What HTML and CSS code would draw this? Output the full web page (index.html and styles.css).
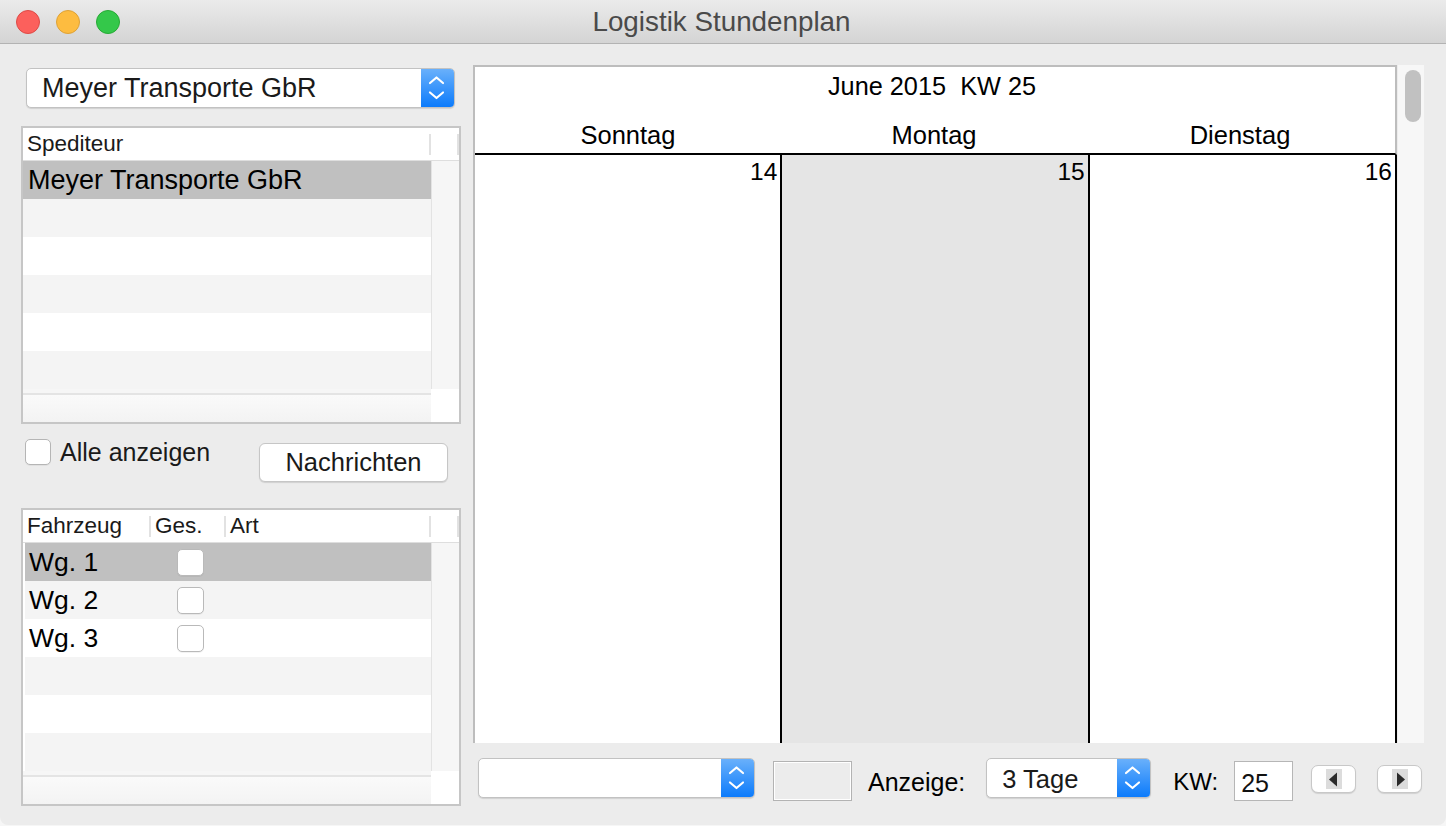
FILE: index.html
```html
<!DOCTYPE html>
<html>
<head>
<meta charset="utf-8">
<title>Logistik Stundenplan</title>
<link rel="stylesheet" href="styles.css">
</head>
<body>
<div class="window">
  <div class="titlebar">
    <div class="lights">
      <span class="light red"></span>
      <span class="light yellow"></span>
      <span class="light green"></span>
    </div>
    <div class="title">Logistik Stundenplan</div>
    <div></div>
  </div>

  <div class="content">
    <!-- left side: carrier + vehicles -->
    <div class="left">
      <div class="popup popup-carrier">
        <span class="popup-text">Meyer Transporte GbR</span>
        <span class="popup-arrows">
          <svg width="33" height="38" viewBox="0 0 33 38"><polyline points="9,14 15.5,8.5 22,14"/><polyline points="9,23.5 15.5,29 22,23.5"/></svg>
        </span>
      </div>

      <div class="table table-carrier">
        <div class="thead">
          <div class="th th-full">Spediteur</div>
          <div class="sep"></div>
          <div class="th th-scroll"></div>
          <div class="sep"></div>
        </div>
        <div class="rows">
          <div class="row selected"><span class="cell-name">Meyer Transporte GbR</span></div>
          <div class="row alt"></div>
          <div class="row"></div>
          <div class="row alt"></div>
          <div class="row"></div>
          <div class="row alt"></div>
        </div>
        <div class="vscroll"></div>
        <div class="hscroll"></div>
        <div class="corner"></div>
      </div>

      <div class="options">
        <label class="check-label"><span class="checkbox"></span>Alle anzeigen</label>
        <button class="button">Nachrichten</button>
      </div>

      <div class="table table-vehicles">
        <div class="thead">
          <div class="th th-vehicle">Fahrzeug</div>
          <div class="sep"></div>
          <div class="th th-ges">Ges.</div>
          <div class="sep"></div>
          <div class="th th-art">Art</div>
          <div class="sep"></div>
          <div class="th th-scroll"></div>
          <div class="sep"></div>
        </div>
        <div class="rows inset">
          <div class="row selected"><span class="cell-vehicle">Wg. 1</span><span class="checkbox small"></span></div>
          <div class="row alt"><span class="cell-vehicle">Wg. 2</span><span class="checkbox small"></span></div>
          <div class="row"><span class="cell-vehicle">Wg. 3</span><span class="checkbox small"></span></div>
          <div class="row alt"></div>
          <div class="row"></div>
          <div class="row alt"></div>
        </div>
        <div class="vscroll"></div>
        <div class="hscroll"></div>
        <div class="corner"></div>
      </div>
    </div>

    <!-- right side: calendar -->
    <div class="right">
      <div class="cal-wrap">
        <div class="calendar">
          <div class="cal-head">
            <div class="cal-title">June 2015&nbsp;&nbsp;KW 25</div>
            <div class="cal-days">
              <div>Sonntag</div>
              <div>Montag</div>
              <div>Dienstag</div>
            </div>
          </div>
          <div class="cal-body">
            <div class="day">14</div>
            <div class="day shaded">15</div>
            <div class="day">16</div>
          </div>
        </div>
        <div class="scrollbar"><div class="thumb"></div></div>
      </div>

      <div class="toolbar">
        <div class="popup popup-empty">
          <span class="popup-text"></span>
          <span class="popup-arrows">
            <svg width="33" height="38" viewBox="0 0 33 38"><polyline points="9,14 15.5,8.5 22,14"/><polyline points="9,23.5 15.5,29 22,23.5"/></svg>
          </span>
        </div>
        <div class="well"></div>
        <span class="label label-anzeige">Anzeige:</span>
        <div class="popup popup-days">
          <span class="popup-text">3 Tage</span>
          <span class="popup-arrows">
            <svg width="33" height="38" viewBox="0 0 33 38"><polyline points="9,14 15.5,8.5 22,14"/><polyline points="9,23.5 15.5,29 22,23.5"/></svg>
          </span>
        </div>
        <span class="label label-kw">KW:</span>
        <div class="field">25</div>
        <button class="arrow-btn prev">
          <svg width="16" height="20" viewBox="0 0 16 20"><rect width="16" height="20" fill="#dcdcdc"/><polygon points="3,10.5 11,3.5 11,17.5" fill="#2b2b2b"/></svg>
        </button>
        <button class="arrow-btn next">
          <svg width="16" height="20" viewBox="0 0 16 20"><rect width="16" height="20" fill="#dcdcdc"/><polygon points="5,3.5 13,10.5 5,17.5" fill="#2b2b2b"/></svg>
        </button>
      </div>
    </div>
  </div>
</div>
</body>
</html>
```

FILE: styles.css
```css
body {
    margin: 0;
    background: #f6f6f6;
    font-family: "Liberation Sans", Arial, sans-serif;
    color: #111;
}

.window {
    width: 1446px;
    height: 825px;
    background: #ececec;
    border-radius: 0 0 8px 8px;
    overflow: hidden;
    display: flex;
    flex-direction: column;
}

/* title bar */
.titlebar {
    height: 44px;
    box-sizing: border-box;
    border-bottom: 1px solid #b3b3b3;
    background: linear-gradient(#ebebeb, #d4d4d4);
    display: grid;
    grid-template-columns: 1fr auto 1fr;
    align-items: center;
}

.lights {
    display: flex;
    gap: 16px;
    padding-left: 16px;
    margin-top: 1px;
}

.light {
    width: 22px;
    height: 22px;
    border-radius: 50%;
    border: 1px solid;
}

.red { background: #fc605c; border-color: #de4a46; }
.yellow { background: #fdbc40; border-color: #dea236; }
.green { background: #34c84a; border-color: #27aa35; }

.title {
    font-size: 27.8px;
    color: #4a4a4a;
    margin-left: -3px;
    margin-top: 1px;
}

/* main area */
.content {
    flex: 1;
    display: flex;
    gap: 12px;
    padding: 21px 0 0 21px;
}

.left {
    width: 440px;
    display: flex;
    flex-direction: column;
}

/* popup buttons */
.popup {
    height: 40px;
    box-sizing: border-box;
    display: flex;
    background: #fff;
    border: 1px solid #c2c2c2;
    border-radius: 5px;
    box-shadow: 0 1px 1px rgba(0, 0, 0, 0.12);
    overflow: hidden;
}

.popup-text {
    flex: 1;
    padding-left: 15px;
    font-size: 25.5px;
    line-height: 40px;
    color: #1a1a1a;
}

.popup-arrows {
    width: 33px;
    background: linear-gradient(#69b0fb, #0c7bfb);
    display: flex;
    align-items: center;
}

.popup-arrows polyline {
    fill: none;
    stroke: #fff;
    stroke-width: 2.2;
    stroke-linecap: round;
    stroke-linejoin: round;
}

.popup-carrier {
    margin: 3px 6px 0 5px;
}

.popup-carrier .popup-text {
    font-size: 27px;
    line-height: 38px;
}

/* tables */
.table {
    height: 298px;
    box-sizing: border-box;
    border: 2px solid #c6c6c6;
    background: #fff;
    display: grid;
    grid-template-columns: 408px 28px;
    grid-template-rows: 33px 228px 33px;
}

.table-carrier {
    margin-top: 18px;
}

.table-vehicles {
    margin-top: 26px;
}

.thead {
    grid-column: 1 / 3;
    display: flex;
    align-items: center;
    border-bottom: 1px solid #dedede;
    font-size: 22.5px;
    color: #1a1a1a;
}

.th {
    padding-left: 4px;
    box-sizing: border-box;
}

.th-full { width: 406px; }
.th-scroll { width: 26px; }
.th-vehicle { width: 126px; }
.th-ges { width: 73px; }
.th-art { width: 203px; }

.sep {
    width: 2px;
    height: 21px;
    background: #e2e2e2;
}

.rows {
    display: flex;
    flex-direction: column;
}

.rows.inset {
    padding-left: 2px;
}

.row {
    height: 38px;
    display: flex;
    align-items: center;
    background: #fff;
}

.row.alt { background: #f4f4f4; }
.row.selected { background: #c0c0c0; }

.cell-name {
    padding-left: 5px;
    font-size: 27px;
    color: #000;
}

.cell-vehicle {
    width: 126px;
    box-sizing: border-box;
    padding-left: 4px;
    font-size: 26.5px;
    color: #000;
}

.vscroll {
    background: #f6f6f6;
    border-left: 1px solid #e3e3e3;
}

.hscroll {
    background: linear-gradient(to bottom, #f6f6f6 0, #f6f6f6 4px, #e4e4e4 4px, #e4e4e4 6px, #fafafa 6px, #f3f3f3 100%);
}

.corner {
    background: #fff;
}

/* checkboxes and button */
.checkbox {
    width: 26px;
    height: 26px;
    box-sizing: border-box;
    border: 1px solid #b5b5b5;
    border-radius: 5px;
    background: #fff;
    box-shadow: 0 1px 0 rgba(0, 0, 0, 0.05);
}

.checkbox.small {
    width: 27px;
    height: 27px;
    margin-left: 26px;
    border-color: #b9b9b9;
}

.options {
    margin-top: 15px;
    display: flex;
    justify-content: space-between;
    align-items: flex-start;
    padding: 0 13px 0 4px;
}

.check-label {
    display: flex;
    align-items: center;
    gap: 9px;
    font-size: 25px;
    color: #1a1a1a;
    line-height: 26px;
}

.button {
    margin-top: 4px;
    width: 189px;
    height: 39px;
    background: #fff;
    border: 1px solid #c6c6c6;
    border-radius: 6px;
    box-shadow: 0 1px 1px rgba(0, 0, 0, 0.12);
    font-family: "Liberation Sans", Arial, sans-serif;
    font-size: 25.5px;
    color: #1a1a1a;
    padding: 0;
}

/* calendar */
.right {
    display: flex;
    flex-direction: column;
}

.cal-wrap {
    display: flex;
    height: 678px;
}

.calendar {
    width: 924px;
    box-sizing: border-box;
    border-left: 2px solid #bdbdbd;
    background: #fff;
    display: flex;
    flex-direction: column;
    color: #000;
}

.cal-head {
    border-top: 2px solid #bdbdbd;
    border-right: 2px solid #bdbdbd;
    border-bottom: 2px solid #000;
    padding: 6px 0 5px;
    font-size: 25.3px;
    line-height: 26px;
}

.cal-title {
    text-align: center;
    padding-right: 6px;
}

.cal-days {
    margin-top: 23px;
    display: grid;
    grid-template-columns: repeat(3, 1fr);
    text-align: center;
    font-size: 25.5px;
    padding-right: 2px;
}

.cal-body {
    flex: 1;
    display: grid;
    grid-template-columns: repeat(3, 1fr);
}

.day {
    border-right: 2px solid #000;
    text-align: right;
    padding: 4px 3px 0 0;
    font-size: 24.5px;
    line-height: 26px;
}

.day.shaded {
    background: #e5e5e5;
}

.scrollbar {
    width: 26px;
    margin-left: 1px;
    background: #f7f7f7;
    padding: 5px 0 0 7px;
    box-sizing: border-box;
}

.thumb {
    width: 16px;
    height: 52px;
    border-radius: 8px;
    background: #c1c1c1;
}

/* bottom toolbar */
.toolbar {
    height: 82px;
    display: flex;
    align-items: flex-start;
    padding: 15px 0 0 5px;
    box-sizing: border-box;
}

.popup-empty {
    width: 277px;
}

.popup-days {
    width: 165px;
    margin-left: 21px;
}

.well {
    width: 79px;
    height: 40px;
    margin: 3px 0 0 18px;
    box-sizing: border-box;
    border: 1px solid #b3b3b3;
    box-shadow: inset 0 0 0 1px #fff;
    background: #ececec;
}

.label {
    font-size: 25px;
    line-height: 26px;
    margin-top: 11px;
    color: #000;
}

.label-anzeige {
    margin-left: 16px;
}

.label-kw {
    margin-left: 22px;
    font-size: 24px;
}

.field {
    width: 59px;
    height: 40px;
    margin: 3px 0 0 16px;
    box-sizing: border-box;
    border: 1px solid #b6b6b6;
    background: #fff;
    font-size: 25px;
    line-height: 42px;
    padding-left: 6px;
    color: #111;
}

.arrow-btn {
    width: 45px;
    height: 28px;
    margin-top: 7px;
    padding: 0;
    background: #fff;
    border: 1px solid #c8c8c8;
    border-radius: 7px;
    box-shadow: 0 1px 1px rgba(0, 0, 0, 0.12);
    display: flex;
    align-items: center;
    justify-content: center;
}

.arrow-btn.prev {
    margin-left: 18px;
}

.arrow-btn.next {
    margin-left: 21px;
}
```
